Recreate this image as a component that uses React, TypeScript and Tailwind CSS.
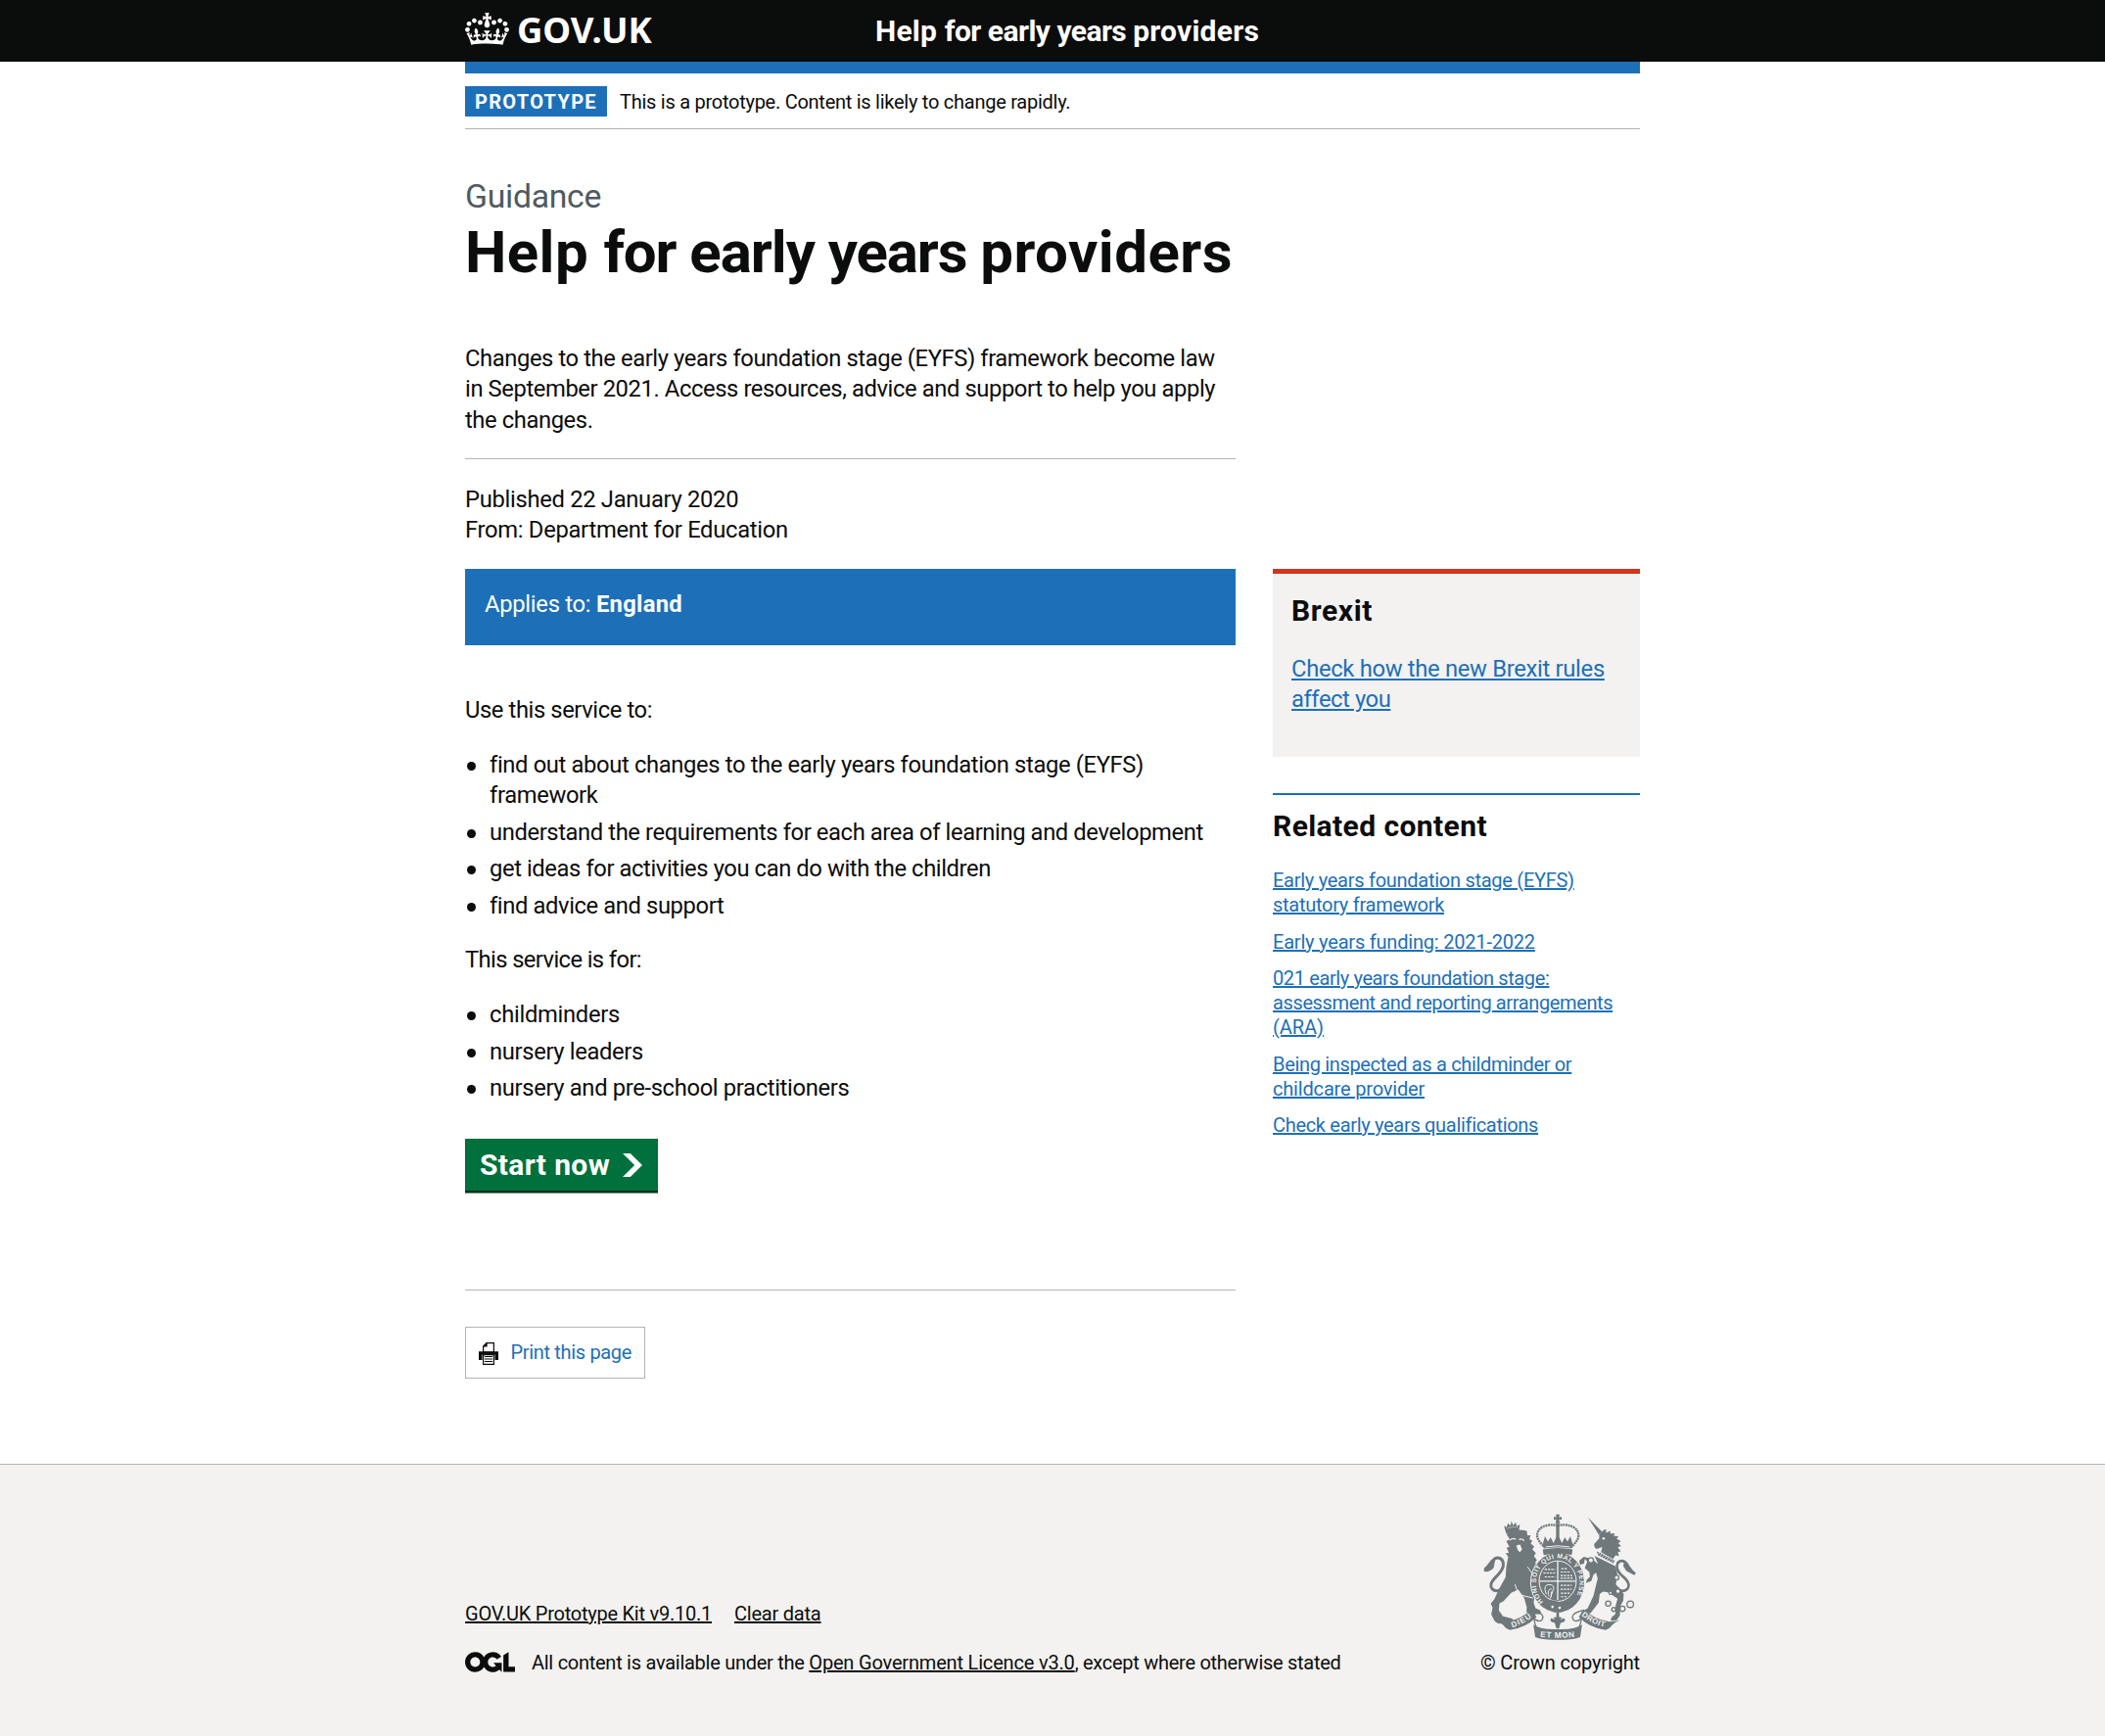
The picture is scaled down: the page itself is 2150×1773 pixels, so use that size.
import React from 'react';

function Crown() {
  return (
    <svg className="block h-[33px] w-[45px]" viewBox="0 0 132 97" fill="#fff" aria-hidden="true">
      <path
        fillRule="evenodd"
        d="M25 30.2c3.5 1.5 7.7-.2 9.1-3.7 1.5-3.6-.2-7.8-3.9-9.2-3.6-1.4-7.6.3-9.1 3.9-1.4 3.5.3 7.5 3.9 9zM9 39.5c3.6 1.5 7.8-.2 9.2-3.7 1.5-3.6-.2-7.8-3.9-9.1-3.6-1.5-7.6.2-9.1 3.8-1.4 3.5.3 7.5 3.8 9zM4.4 57.2c3.5 1.5 7.7-.2 9.1-3.8 1.5-3.6-.2-7.7-3.9-9.1-3.5-1.5-7.6.3-9.1 3.8-1.4 3.5.3 7.6 3.9 9.1zm38.3-21.4c3.5 1.5 7.7-.2 9.1-3.8 1.5-3.6-.2-7.7-3.9-9.1-3.6-1.5-7.6.3-9.1 3.8-1.3 3.6.4 7.7 3.9 9.1zm64.4-5.6c-3.6 1.5-7.8-.2-9.1-3.7-1.5-3.6.2-7.8 3.8-9.2 3.6-1.4 7.7.3 9.2 3.9 1.3 3.5-.4 7.5-3.9 9zm15.9 9.3c-3.6 1.5-7.7-.2-9.1-3.7-1.5-3.6.2-7.8 3.7-9.1 3.6-1.5 7.7.2 9.2 3.8 1.5 3.5-.3 7.5-3.8 9zm4.7 17.7c-3.6 1.5-7.8-.2-9.2-3.8-1.5-3.6.2-7.7 3.9-9.1 3.6-1.5 7.7.3 9.2 3.8 1.3 3.5-.4 7.6-3.9 9.1zM89.3 35.8c-3.6 1.5-7.8-.2-9.2-3.8-1.4-3.6.2-7.7 3.9-9.1 3.6-1.5 7.7.3 9.2 3.8 1.4 3.6-.3 7.7-3.9 9.1zM69.7 17.7l8.9 4.7V9.3l-8.9 2.8c-.2-.3-.5-.6-.9-.9L72.4 0H59.6l3.5 11.2c-.3.3-.6.5-.9.9l-8.8-2.8v13.1l8.8-4.7c.3.3.6.7.9.9l-5 15.4v.1c-.2.8-.4 1.6-.4 2.4 0 4.1 3.1 7.5 7 8.1h.2c.3 0 .7.1 1 .1.4 0 .7 0 1-.1h.2c4-.6 7.1-4.1 7.1-8.1 0-.8-.1-1.7-.4-2.4V34l-5.1-15.4c.4-.2.7-.6 1-.9zM66 92.8c16.9 0 32.8 1.1 47.1 3.2 4-16.9 8.9-26.7 14-33.5l-9.6-3.4c1 4.9 1.1 7.2 0 10.2-1.5-1.4-3-4.3-4.2-8.7L108.6 76c2.8-2 5-3.2 7.5-3.3-4.4 9.4-10 11.9-13.6 11.2-4.3-.8-6.3-4.6-5.6-7.9 1-4.7 5.7-5.9 8-.5 4.3-8.7-3-11.4-7.6-8.8 7.1-7.2 7.9-13.5 2.1-21.1-8 6.1-8.1 12.3-4.5 20.8-4.7-5.4-12.1-2.5-9.5 6.2 3.4-5.2 7.9-2 7.2 3.1-.6 4.3-6.4 7.8-13.5 7.2-10.3-.9-10.9-8-11.2-13.8 2.5-.5 7.1 1.8 11 7.3L80.2 60c-4.1 4.4-8 5.3-12.3 5.4 1.4-4.4 8-11.6 8-11.6H55.5s6.4 7.2 7.9 11.6c-4.2-.1-8-1-12.3-5.4l1.4 16.4c3.9-5.5 8.5-7.7 10.9-7.3-.3 5.8-.9 12.8-11.1 13.8-7.2.6-12.9-2.9-13.5-7.2-.7-5 3.8-8.3 7.1-3.1 2.7-8.7-4.6-11.6-9.4-6.2 3.7-8.5 3.6-14.7-4.6-20.8-5.8 7.6-5 13.9 2.2 21.1-4.7-2.6-11.9.1-7.7 8.8 2.3-5.5 7.1-4.2 8.1.5.7 3.3-1.3 7.1-5.7 7.9-3.5.7-9-1.8-13.5-11.2 2.5.1 4.7 1.3 7.5 3.3l-4.7-15.4c-1.2 4.4-2.7 7.2-4.3 8.7-1.1-3-.9-5.3 0-10.2l-9.5 3.4c5 6.9 9.9 16.7 14 33.5 14.8-2.1 30.8-3.2 47.7-3.2z"
      />
    </svg>
  );
}

function Ogl() {
  return (
    <svg className="block h-[21px] w-[51px]" viewBox="0 0 483.2 195.7" fill="#0b0c0c" aria-hidden="true">
      <path d="M421.5 142.8V.1l-50.7 32.3v161.1h112.4v-50.7zm-122.3-9.6A47.12 47.12 0 0 1 221 97.8c0-26 21.1-47.1 47.1-47.1 16.7 0 31.4 8.7 39.7 21.8l42.7-27.2A97.63 97.63 0 0 0 268.1 0c-36.5 0-68.3 20.1-85.1 49.7A98 98 0 0 0 97.8 0C43.9 0 0 43.9 0 97.8s43.9 97.8 97.8 97.8c36.5 0 68.3-20.1 85.1-49.7a97.76 97.76 0 0 0 149.6 25.4l19.4 22.2h3v-87.8h-80l24.3 27.5zM97.8 145c-26 0-47.1-21.1-47.1-47.1s21.1-47.1 47.1-47.1 47.1 21.1 47.1 47.1S123.8 145 97.8 145" />
    </svg>
  );
}

function Printer() {
  return (
    <svg className="block h-[23px] w-5" viewBox="0 0 20 23" aria-hidden="true">
      <path d="M8 .6h7.4V10H4.6V4z" fill="#fff" stroke="#0b0c0c" strokeWidth="1.2" />
      <path d="M4 4.6 8.6 0v4.6z" fill="#0b0c0c" />
      <path d="M0 9.2h20V18h-3.500v-5.500h-13V18H0z" fill="#0b0c0c" />
      <path d="M4.600 12.600h10.800v9.800H4.600z" fill="#fff" stroke="#0b0c0c" strokeWidth="1.200" />
      <path d="M6 14.500h8M6 17h8M6 19.500h8" stroke="#0b0c0c" strokeWidth="1.100" />
    </svg>
  );
}

function Crest() {
  return (
    <svg className="block h-[129px] w-[156px]" viewBox="75 45 468 388" fill="#6f787b" aria-hidden="true">
      <defs>
        <path id="garter" d="M259 315a67 76 0 1 1 88 0" />
        <path id="scroll-left" d="M163 394Q196 386 230 358" />
        <path id="scroll-mid" d="M249 423Q303 430 358 423" />
        <path id="scroll-right" d="M375 358Q410 386 452 394" />
      </defs>
      {/* lion */}
      <path d="m138 82 8 4 4-12 8 8 3-15 5 14 8-10 3 12 10-5-5 27q-18-4-37 2z" />
      <path d="M148 90q14-6 32-4" stroke="#f3f2f1" strokeWidth="3" strokeDasharray="3 3" fill="none" />
      <path d="M146 108q26-20 62-10l2 14 10-1-4 12 9 5-5 9 11 9-6 9 11 11-6 9 9 12-5 8 8 16 0 40-10-2-12 10 6 26 6 14-3 20 6 16 14 6 4 12-38 1-8-8 1-13-8-29-18-26-22 10-24 26-12 6-2 22 13 18 28 7 5 12-9 5-40-2-10-8-10-19 4-22-6-12 11-13 15-32 20-36 2-31 6-32-8-11 10-1-7-16 9-2-10-18 11-5z" />
      <path d="M156 126q10-8 18-2M184 124q10-4 16 4" stroke="#f3f2f1" strokeWidth="4" fill="none" />
      <path d="m176 142 12-2 5 14-6 10-7-8z" fill="#f3f2f1" />
      <path d="m210 208 20 28 12-2M172 262q6 26 22 34l34 8" fill="none" stroke="#f3f2f1" strokeWidth="3" />
      <path d="M134 272c-20 20-43 5-34-16 9-18 36-30 36-55 0-18-14-24-26-18-12 7-18 25-32 34" fill="none" stroke="#6f787b" strokeWidth="9" />
      <path d="M76 222q2-16 15-16 2-20 21-24l-6 30q-14 14-30 10z" />
      {/* unicorn */}
      <path d="m396 56 43 44-10 9z" />
      <path d="m430 108 15-13 8-2-3 11 15-6-1 8 14-1-3 8 15 2-6 7 13 7-8 6 9 10-11 2 10 14-9 1 3 14-10-4-8 12-37-21 4-16-17 6q-9-4-8-15l16-18z" />
      <circle cx="444" cy="121" r="4" fill="#f3f2f1" />
      <path d="m424 163 53 28M427 170l48 25" stroke="#6f787b" strokeWidth="5" strokeDasharray="6 2" />
      <path d="m416 174 64 32 6 22-4 34 14 16 10 14-2 21-8 15-2 30-10 14-18 2 2-10 12-11 1-27 6-20-29-20-16-2-10 8-3 26-25 32-26 6 2-11 15-10 18-38 9-38 4-15-5-18-8 6-7 20-16 6 2-10 10-10-2-14-14-12 8-20-8-8-2 14-12 4-3-13 14-12 24 6 20 16z" />
      <path d="M484 272c18 20 44 6 35-16-8-18-34-25-34-48 0-20 20-24 30-8 8 10 12 20 26 30" fill="none" stroke="#6f787b" strokeWidth="8" />
      <path d="m508 192 12 6 2 12 19 21-4 2-23-12-10-16z" />
      <g fill="#f3f2f1" stroke="#6f787b" strokeWidth="4">
        <circle cx="405" cy="188" r="8" />
        <circle cx="484" cy="241" r="7" />
        <circle cx="465" cy="288" r="5" />
        <circle cx="488" cy="283" r="7" />
        <circle cx="458" cy="321" r="8" />
        <circle cx="475" cy="339" r="6" />
        <circle cx="502" cy="337" r="8" />
        <circle cx="526" cy="323" r="10" />
      </g>
      {/* shield inside the garter */}
      <ellipse cx="303" cy="256" rx="83" ry="93" stroke="#f3f2f1" strokeWidth="3" />
      <ellipse cx="303" cy="252" rx="57" ry="62" fill="none" stroke="#f3f2f1" strokeWidth="3" />
      <path d="M303 192v118M247 252h112" stroke="#f3f2f1" strokeWidth="4" />
      <path d="M263 216h32M259 227h36M263 239h32M314 214h20M312 224h31M312 235h36M312 243h40M312 265h34M312 277h34M313 289h28M313 300h18" stroke="#f3f2f1" strokeWidth="3.500" strokeDasharray="7 3" />
      <path d="M268 292c-8-20-4-30 11-29 10 0 14 8 10 16l-9 26M276 298c-6-14 0-22 8-22M283 300v-16" stroke="#f3f2f1" strokeWidth="3" fill="none" />
      <text fontFamily="Liberation Sans" fontWeight="700" fontSize="20" fill="#f3f2f1">
        <textPath href="#garter" textLength="325">HONI SOIT QUI MAL Y PENSE</textPath>
      </text>
      <path d="m262 322 20-12 44 10 20-8 6 14-38 22h-22z" />
      <circle cx="287" cy="331" r="4" fill="#f3f2f1" />
      <circle cx="309" cy="334" r="4" fill="#f3f2f1" />
      <path d="M299 348h8v14l10 2-7 6 14-4q6 12-12 14l-5 18h-8l-5-18q-18-2-12-14l14 4-7-6 10-2z" />
      {/* royal crown */}
      <path d="M297 47h12l-2 9 8-2v10l-8-2 3 12h-14l3-12-8 2V54l8 2z" />
      <path d="M303 82C275 74 240 84 240 112c0 14 14 26 22 36M303 82c28-8 64 2 64 30 0 14-14 26-22 36" fill="none" stroke="#6f787b" strokeWidth="7" strokeDasharray="6 2" />
      <path d="M298 74h10v50h-10z" />
      <path d="m256 142 8-28 9 17 8-14 9 18 13-27 13 27 9-18 8 14 9-17 8 28-6 10q-41-7-82 0z" />
      <path d="M257 155q46-10 92 0l-3 17q-43-10-86 0z" />
      <path d="M266 147q37-7 74 0" stroke="#f3f2f1" strokeWidth="3" fill="none" />
      {/* motto scroll */}
      <path d="M112 372q20 6 36 4 44-8 76-38l14 24q-34 34-82 40-14-4-22-16-10-10-22-14zM494 372q-20 6-36 4-44-8-76-38l-14 24q34 34 82 40 14-4 22-16 10-10 22-14z" />
      <path d="M228 386q20 16 75 14 55 2 75-14l-6 38q-24 10-69 8-45 2-69-8z" />
      <path d="M226 342q42 10 28 30-10 8-24-6 2 16 8 30M380 342q-42 10-28 30 10 8 24-6-2 16-8 30" fill="none" stroke="#6f787b" strokeWidth="4" />
      <g fontFamily="Liberation Sans" fontWeight="700" fill="#f3f2f1">
        <text fontSize="24"><textPath href="#scroll-left" textLength="68">DIEU</textPath></text>
        <text fontSize="25"><textPath href="#scroll-mid" textLength="106">ET MON</textPath></text>
        <text fontSize="24"><textPath href="#scroll-right" textLength="80">DROIT</textPath></text>
      </g>
    </svg>
  );
}

function Item({ children }: { children: React.ReactNode }) {
  return (
    <li className="mb-[6.25px] flex gap-[14px] pl-[2px]">
      <span className="mt-[12px] size-[9px] shrink-0 rounded-full bg-[#0b0c0c]" />
      <span>{children}</span>
    </li>
  );
}

function ServiceName() {
  return (
    <>
      <span className="tracking-[0.007em]">Help </span>
      <span className="tracking-[-0.018em]">for </span>
      <span className="tracking-[-0.017em]">early </span>
      <span className="tracking-[-0.018em]">years </span>
      <span className="tracking-[0.008em]">providers</span>
    </>
  );
}

const link = 'underline decoration-2 underline-offset-[1px]';

export default function App() {
  return (
    <div className="flex min-h-[1773px] flex-col bg-white font-['Roboto',sans-serif] text-[23.75px] leading-[31.25px] whitespace-nowrap text-[#0b0c0c]">
      <header className="h-[63px] bg-[#0b0c0c] text-white">
        <div className="mx-auto flex h-full w-[1200px]">
          <div className="flex w-[420px] gap-[8px]">
            <div className="pt-[13px]"><Crown /></div>
            <span className="font-['Noto_Sans',sans-serif] text-[36.5px] leading-[60px] font-bold tracking-[-0.1px]">GOV.UK</span>
          </div>
          <span className="-ml-px text-[30px] leading-[63px] font-bold whitespace-pre"><ServiceName /></span>
        </div>
      </header>

      <div className="mx-auto w-[1200px] grow">
        <div className="h-3 bg-[#1d70b8]" />
        <div className="flex h-[57px] items-start gap-[13px] border-b border-[#b1b4b6] pt-[13px] text-[20px]">
          <strong className="h-[31px] w-[145px] bg-[#1d70b8] pl-[10px] leading-[32px] font-bold tracking-[1.3px] text-white">PROTOTYPE</strong>
          <span className="leading-[32px] tracking-[-0.26px]">This is a prototype. Content is likely to change rapidly.</span>
        </div>

        <p className="mt-[49px] text-[33.75px] leading-[40px] tracking-[-0.3px] text-[#505a5f]">Guidance</p>
        <h1 className="mt-[6px] text-[60px] leading-[62px] font-bold whitespace-pre"><ServiceName /></h1>

        <div className="mt-[62px] w-[787px] border-b border-[#b1b4b6] pb-[23.25px]">
          <p className="tracking-[-0.4px]">
            Changes to the early years foundation stage (EYFS) framework become law
            <br />
            in September 2021. Access resources, advice and support to help you apply
            <br />
            the changes.
          </p>
        </div>
        <p className="mt-[26px] tracking-[-0.3px]">
          Published 22 January 2020
          <br />
          From: Department for Education
        </p>

        <div className="mt-[23.5px] flex gap-[38px]">
          <main className="w-[787px]">
            <div className="h-[78px] bg-[#1d70b8] pt-[21px] pl-[20px] tracking-[-0.27px] text-white">
              Applies to: <strong className="font-bold tracking-[0.3px]">England</strong>
            </div>
            <p className="mt-[51px] tracking-[-0.4px]">Use this service to:</p>
            <ul className="mt-[24.6px]">
              <Item>
                <span className="tracking-[-0.355px]">find out about changes to the early years foundation stage (EYFS)<br />framework</span>
              </Item>
              <Item><span className="tracking-[-0.39px]">understand the requirements for each area of learning and development</span></Item>
              <Item><span className="tracking-[-0.4px]">get ideas for activities you can do with the children</span></Item>
              <Item><span className="tracking-[-0.39px]">find advice and support</span></Item>
            </ul>
            <p className="mt-[24.5px] tracking-[-0.6px]">This service is for:</p>
            <ul className="mt-[24.5px]">
              <Item><span className="tracking-[-0.29px]">childminders</span></Item>
              <Item><span className="tracking-[-0.34px]">nursery leaders</span></Item>
              <Item><span className="tracking-[-0.34px]">nursery and pre-school practitioners</span></Item>
            </ul>
            <button className="mt-[35.3px] flex h-[53px] w-[197px] items-start gap-[13px] bg-[#00703c] pt-[8px] pl-[15px] text-[30px] leading-[37.5px] font-bold text-white shadow-[0_2.5px_0_#002d18]">
              <span className="tracking-[0.36px]">Start now</span>
              <svg className="mt-[7px] h-6 w-5" viewBox="0 0 33 40" fill="#fff" preserveAspectRatio="none" aria-hidden="true">
                <path d="M0 0h13l20 20-20 20H0l20-20z" />
              </svg>
            </button>
            <hr className="mt-[101px] border-t border-[#b1b4b6]" />
            <button className="mt-[37px] flex h-[53px] w-[184px] items-start gap-[12.5px] border border-[#b1b4b6] pt-[13px] pl-[13px] text-[20px] leading-[25px] text-[#1d70b8]">
              <span className="pt-[2px]"><Printer /></span>
              <span className="tracking-[-0.33px]">Print this page</span>
            </button>
          </main>

          <aside className="w-[375px] text-[#1d70b8]">
            <section className="h-[192px] border-t-[5px] border-[#d4351c] bg-[#f3f2f1] px-[19px] pt-[19px]">
              <h2 className="text-[30px] leading-[37.5px] font-bold tracking-[0.6px] text-[#0b0c0c]">Brexit</h2>
              <a className="mt-[25px] block tracking-[-0.3px] underline decoration-2 underline-offset-[2px]">
                Check how the new Brexit rules
                <br />
                <span className="tracking-[-0.42px]">affect you</span>
              </a>
            </section>
            <section className="mt-[37px] border-t-2 border-[#1d70b8] pt-[12.5px] text-[20px] leading-[25px]">
              <h2 className="text-[30px] leading-[37.5px] font-bold tracking-[0.41px] text-[#0b0c0c]">Related content</h2>
              <ul className="mt-[25px] flex flex-col gap-[12.5px]">
                <li>
                  <a className={`${link} tracking-[-0.27px]`}>Early years foundation stage (EYFS)<br />statutory framework</a>
                </li>
                <li><a className={`${link} tracking-[-0.2px]`}>Early years funding: 2021-2022</a></li>
                <li>
                  <a className={`${link} tracking-[-0.38px]`}>021 early years foundation stage:<br />assessment and reporting arrangements<br /><span className="tracking-[-0.05px]">(ARA)</span></a>
                </li>
                <li>
                  <a className={`${link} tracking-[-0.33px]`}>Being inspected as a childminder or<br /><span className="tracking-[-0.18px]">childcare provider</span></a>
                </li>
                <li><a className={`${link} tracking-[-0.31px]`}>Check early years qualifications</a></li>
              </ul>
            </section>
          </aside>
        </div>
      </div>

      <footer className="h-[278px] border-t border-[#b1b4b6] bg-[#f3f2f1] text-[20px] leading-[25px]">
        <div className="mx-auto flex w-[1200px] justify-between">
          <div className="pt-[140px]">
            <div className="flex gap-[23px]">
              <a className={`${link} tracking-[-0.24px]`}>GOV.UK Prototype Kit v9.10.1</a>
              <a className={`${link} tracking-[-0.22px]`}>Clear data</a>
            </div>
            <div className="mt-[25px] flex gap-[17px]">
              <div className="pt-px"><Ogl /></div>
              <p className="tracking-[-0.27px]">
                All content is available under the <a className={`${link} tracking-[-0.18px]`}>Open Government Licence v3.0</a>, except where otherwise stated
              </p>
            </div>
          </div>
          <div className="flex flex-col items-end pt-[50px]">
            <div className="mr-[4px]"><Crest /></div>
            <span className="mt-[11px] tracking-[-0.15px]">© Crown copyright</span>
          </div>
        </div>
      </footer>
    </div>
  );
}
